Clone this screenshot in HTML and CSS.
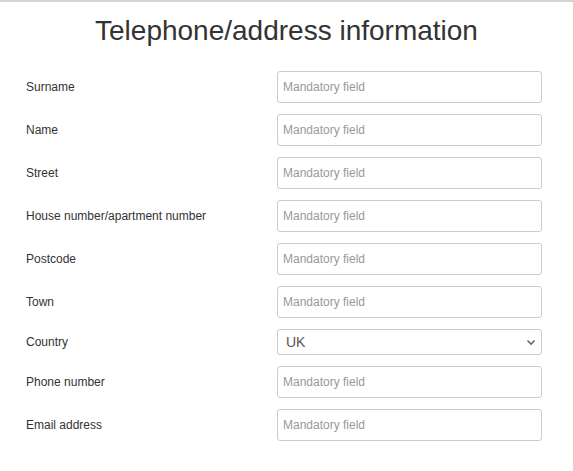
FILE: index.html
```html
<!DOCTYPE html>
<html lang="en">
<head>
  <meta charset="UTF-8" />
  <meta name="viewport" content="width=device-width, initial-scale=1.0" />
  <title>Telephone/address information</title>
  <link rel="stylesheet" href="styles.css">
</head>
<body>
  <div class="page">
    <h1>Telephone/address information</h1>

    <form class="address-form">
      <label for="surname">Surname</label>
      <input type="text" id="surname" placeholder="Mandatory field" />

      <label for="name">Name</label>
      <input type="text" id="name" placeholder="Mandatory field" />

      <label for="street">Street</label>
      <input type="text" id="street" placeholder="Mandatory field" />

      <label for="house">House number/apartment number</label>
      <input type="text" id="house" placeholder="Mandatory field" />

      <label for="postcode">Postcode</label>
      <input type="text" id="postcode" placeholder="Mandatory field" />

      <label for="town">Town</label>
      <input type="text" id="town" placeholder="Mandatory field" />

      <label for="country">Country</label>
      <div class="select-wrap">
        <select id="country">
          <option>UK</option>
          <option>Ireland</option>
          <option>France</option>
          <option>Germany</option>
        </select>
        <svg class="chevron" width="10" height="7" viewBox="0 0 10 7">
          <path d="M1.5 1.5 L5 5 L8.5 1.5" fill="none" stroke="#666" stroke-width="1.6" />
        </svg>
      </div>

      <label for="phone">Phone number</label>
      <input type="text" id="phone" placeholder="Mandatory field" />

      <label for="email">Email address</label>
      <input type="text" id="email" placeholder="Mandatory field" />
    </form>
  </div>
</body>
</html>
```

FILE: styles.css
```css
body {
  font-family: 'Liberation Sans', Arial, sans-serif;
  background: #fff;
  color: #333;
  margin: 0;
  padding: 0;
}
.page {
  border-top: 2px solid #d4d4d4;
}
h1 {
  text-align: center;
  font-size: 28px;
  font-weight: normal;
  line-height: 34px;
  color: #333;
  margin: 12px 0 23px 0;
}
.address-form {
  display: grid;
  grid-template-columns: 251px 265px;
  row-gap: 11px;
  align-items: center;
  padding: 0 31px 0 26px;
}
label {
  font-size: 12px;
  color: #333;
}
input, select {
  font-family: 'Liberation Sans', Arial, sans-serif;
  box-sizing: border-box;
  width: 100%;
  border: 1px solid #ccc;
  border-radius: 3px;
  background: #fff;
  margin: 0;
}
input {
  height: 32px;
  padding: 0 5px;
  font-size: 12px;
  color: #555;
}
input::placeholder {
  color: #999;
}
.select-wrap {
  position: relative;
}
select {
  display: block;
  height: 26px;
  padding: 0 8px;
  font-size: 14px;
  color: #555;
  appearance: none;
  -webkit-appearance: none;
}
.chevron {
  position: absolute;
  right: 6px;
  top: 10px;
  pointer-events: none;
}
```
